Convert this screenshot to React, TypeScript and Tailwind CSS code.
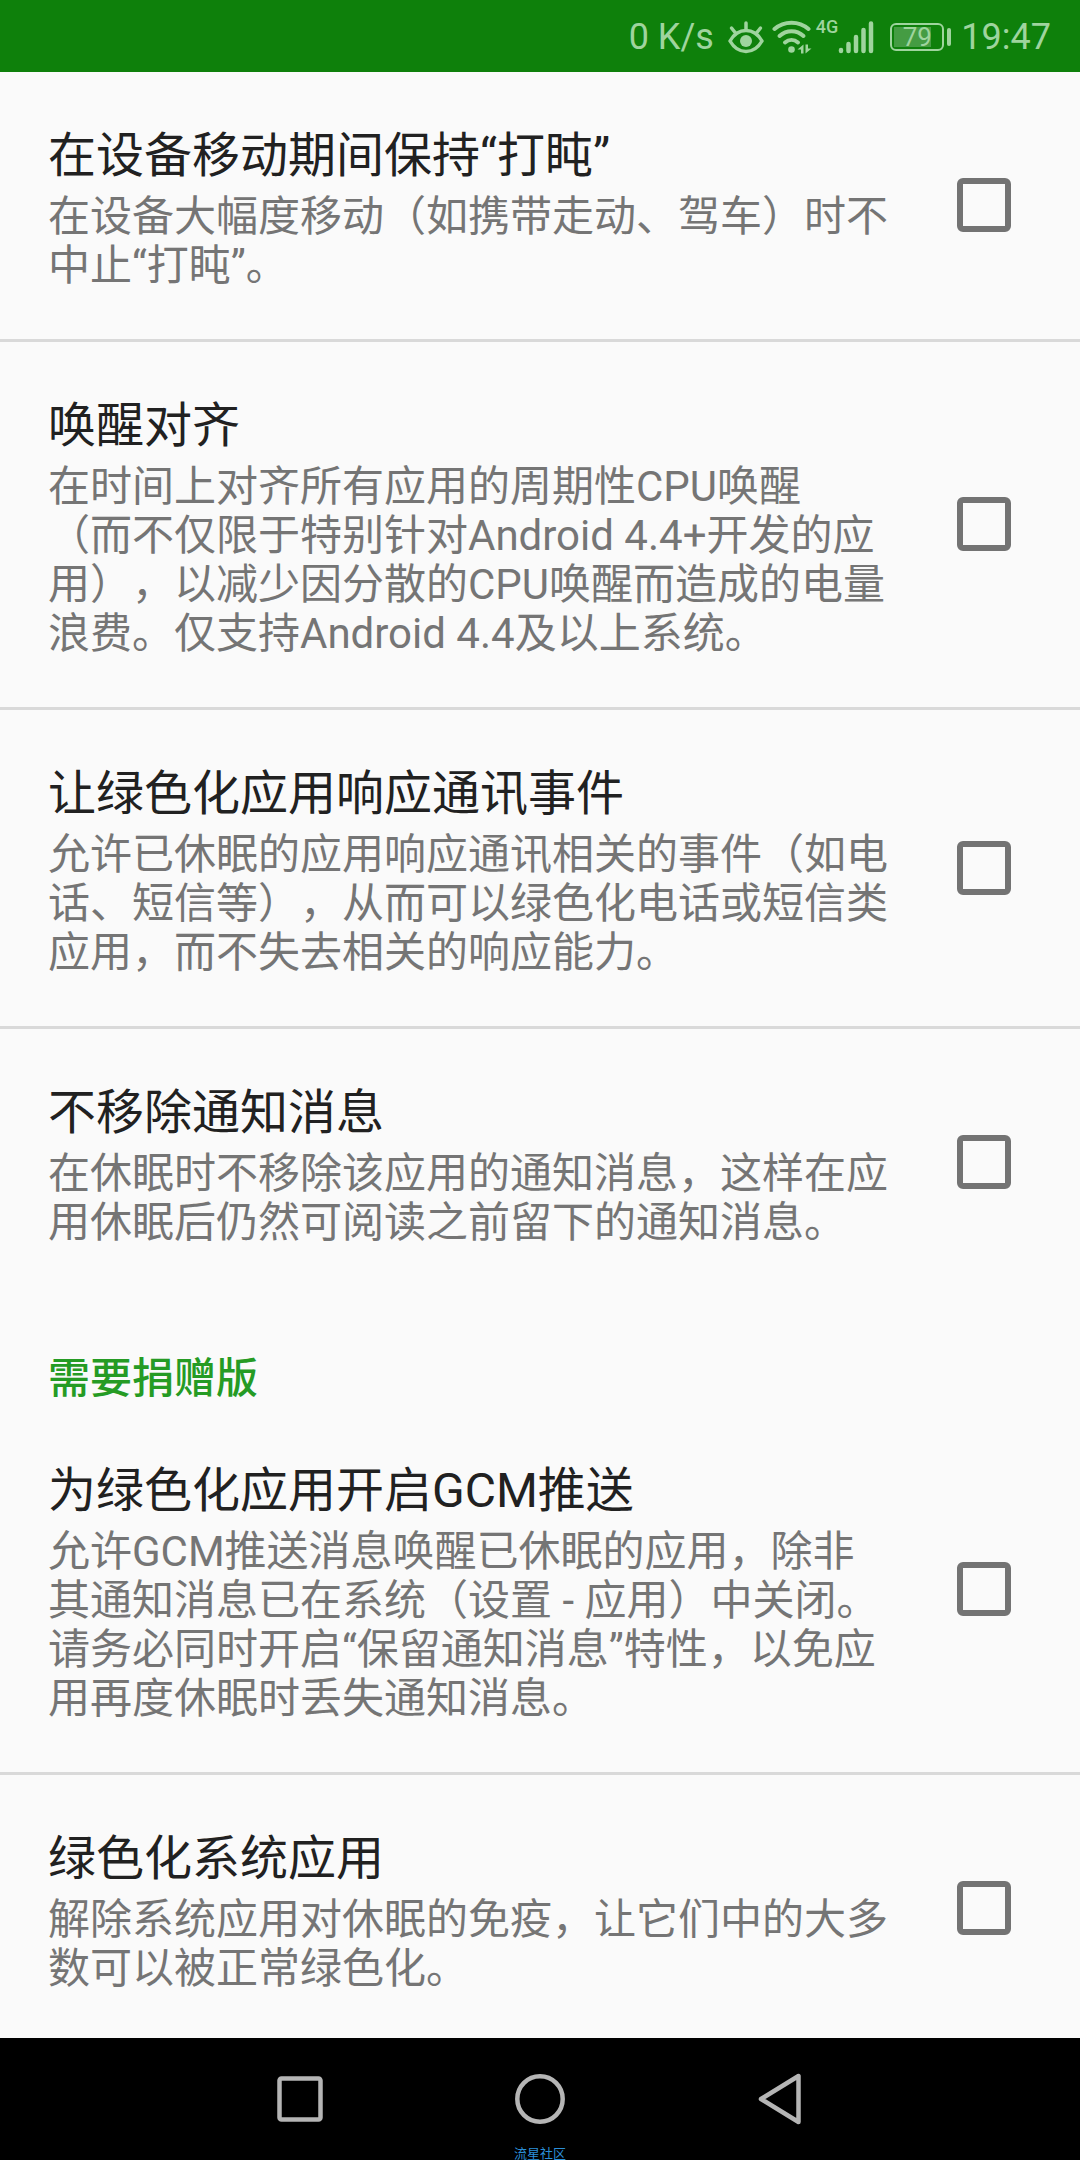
import { useId, useState } from 'react';

interface Option {
  title: string;
  summary: string;
}

const GENERAL_OPTIONS: Option[] = [
  {
    title: '在设备移动期间保持“打盹”',
    summary: '在设备大幅度移动（如携带走动、驾车）时不中止“打盹”。',
  },
  {
    title: '唤醒对齐',
    summary:
      '在时间上对齐所有应用的周期性CPU唤醒\n（而不仅限于特别针对Android 4.4+开发的应用），以减少因分散的CPU唤醒而造成的电量浪费。仅支持Android 4.4及以上系统。',
  },
  {
    title: '让绿色化应用响应通讯事件',
    summary:
      '允许已休眠的应用响应通讯相关的事件（如电话、短信等），从而可以绿色化电话或短信类应用，而不失去相关的响应能力。',
  },
  {
    title: '不移除通知消息',
    summary: '在休眠时不移除该应用的通知消息，这样在应用休眠后仍然可阅读之前留下的通知消息。',
  },
];

const DONATION_OPTIONS: Option[] = [
  {
    title: '为绿色化应用开启GCM推送',
    summary:
      '允许GCM推送消息唤醒已休眠的应用，除非其通知消息已在系统（设置 - 应用）中关闭。请务必同时开启“保留通知消息”特性，以免应用再度休眠时丢失通知消息。',
  },
  {
    title: '绿色化系统应用',
    summary: '解除系统应用对休眠的免疫，让它们中的大多数可以被正常绿色化。',
  },
];

function EyeIcon() {
  return (
    <svg width="36" height="34" viewBox="0 0 36 34" fill="none" stroke="currentColor" strokeWidth="3.500" strokeLinecap="round">
      <path d="M2 21C6 14 12 10.500 18 10.500s12 3.500 16 10.500c-4 7-10 10.500-16 10.500S6 28 2 21Z" strokeLinejoin="round" />
      <circle cx="18" cy="21" r="6" fill="currentColor" stroke="none" />
      <path d="M18 3v7M3.500 8l4 5M32.500 8l-4 5" />
    </svg>
  );
}

function WifiIcon() {
  return (
    <svg width="40" height="34" viewBox="0 0 40 34" fill="none" stroke="currentColor" strokeWidth="4" strokeLinecap="round">
      <path d="M2.500 9C12 .5 27 .5 36.500 9" />
      <path d="M7.500 16c7-6.500 17-6.500 24 0" />
      <path d="M13 22.500c4-3.500 9-3.500 13 0" />
      <circle cx="19.500" cy="29.500" r="3.300" fill="currentColor" stroke="none" />
      <path d="M25.500 29.500l6-5v9h-2.500v-4zM39.500 28.500l-6 5v-9H36v4z" fill="currentColor" stroke="none" />
    </svg>
  );
}

function SignalIcon() {
  return (
    <svg width="36" height="34" viewBox="0 0 36 34" fill="none" stroke="currentColor" strokeWidth="4.500" strokeLinecap="round">
      <path d="M3 31v-1M10.500 31v-7M18 31V17M25.500 31V10M33 31V3.500" />
    </svg>
  );
}

function Battery({ level }: { level: number }) {
  return (
    <div className="flex items-center gap-[3px]">
      <div className="relative flex h-7 w-[54px] items-center justify-center rounded-md border-2 border-current">
        <div className="absolute inset-y-[2px] left-[2px] bg-[#459c43]" style={{ width: `${level * 0.46}px` }} />
        <span className="relative text-[26px] leading-none">{level}</span>
      </div>
      <div className="h-[18px] w-1 rounded-sm bg-current" />
    </div>
  );
}

function StatusBar() {
  return (
    <header className="flex h-[72px] shrink-0 items-center justify-end bg-[#0e800b] pt-0.5 pr-[29px] text-[36px] leading-none text-[#9fd49e]">
      <span>0 K/s</span>
      <div className="ml-3.5">
        <EyeIcon />
      </div>
      <div className="ml-2">
        <WifiIcon />
      </div>
      <span className="mb-5 ml-1 text-[18px] font-medium">4G</span>
      <SignalIcon />
      <div className="ml-4 mr-2.5">
        <Battery level={79} />
      </div>
      <time>19:47</time>
    </header>
  );
}

function OptionRow({ title, summary }: Option) {
  const id = useId();
  const [checked, setChecked] = useState(false);

  return (
    <li className="flex items-center justify-between border-b-3 border-[#d9d9d9] pt-12 pr-[69px] pb-[49px] pl-12 last:border-b-0">
      <label htmlFor={id} className="max-w-[846px]">
        <span className="block text-[48px] leading-[72px] text-[#212121]">{title}</span>
        <span className="block text-[42px] leading-[49px] whitespace-pre-line text-[#757575]">{summary}</span>
      </label>
      <input
        id={id}
        type="checkbox"
        checked={checked}
        onChange={(e) => setChecked(e.target.checked)}
        className="size-[54px] shrink-0 appearance-none rounded-md border-6 border-[#737373] checked:bg-[#259b24]"
      />
    </li>
  );
}

function NavBar() {
  return (
    <nav className="relative flex h-[122px] shrink-0 items-center justify-center gap-[190px] bg-black text-[#b5b5b5]">
      <button type="button" aria-label="最近任务">
        <svg width="50" height="52" viewBox="0 0 50 52" fill="none" stroke="currentColor" strokeWidth="4.500">
          <rect x="4.500" y="5.500" width="41" height="41" rx="2" />
        </svg>
      </button>
      <button type="button" aria-label="主屏幕">
        <svg width="50" height="52" viewBox="0 0 50 52" fill="none" stroke="currentColor" strokeWidth="4.500">
          <circle cx="25" cy="26" r="22.700" />
        </svg>
      </button>
      <button type="button" aria-label="返回">
        <svg width="50" height="52" viewBox="0 0 50 52" fill="none" stroke="currentColor" strokeWidth="4.500" strokeLinejoin="round">
          <path d="M43.500 3v46L6 26z" />
        </svg>
      </button>
      <span className="absolute inset-x-0 bottom-0 text-center text-[13px] leading-3 text-[#2b8fd8]">流星社区</span>
    </nav>
  );
}

export default function App() {
  return (
    <div className="flex h-screen flex-col bg-[#fafafa] font-['Roboto','Noto_Sans_CJK_SC',sans-serif] [text-spacing-trim:space-all]" lang="zh-CN">
      <StatusBar />
      <main className="min-h-0 flex-1 overflow-hidden">
        <ul>
          {GENERAL_OPTIONS.map((option) => (
            <OptionRow key={option.title} {...option} />
          ))}
        </ul>
        <section>
          <h2 className="px-12 pt-14 pb-0.5 text-[42px] leading-[53px] font-medium text-[#259b24]">需要捐赠版</h2>
          <ul>
            {DONATION_OPTIONS.map((option) => (
              <OptionRow key={option.title} {...option} />
            ))}
          </ul>
        </section>
      </main>
      <NavBar />
    </div>
  );
}
